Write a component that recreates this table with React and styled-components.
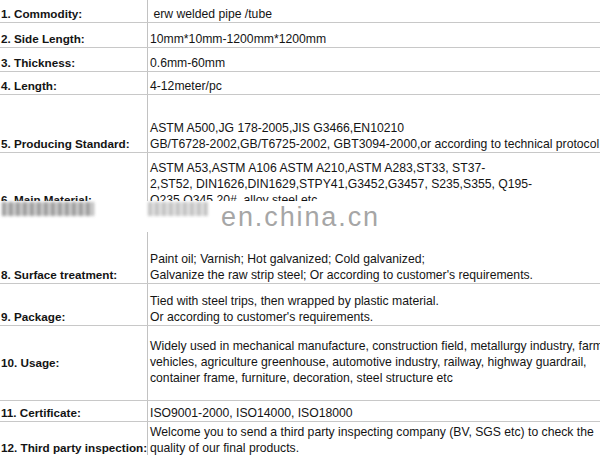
import React from "react";
import styled, { createGlobalStyle } from "styled-components";

const GlobalStyle = createGlobalStyle`
  html, body { margin: 0; padding: 0; background: #ffffff; overflow: hidden; }
`;

const Sheet = styled.div`
  position: relative;
  width: 600px;
  height: 455px;
  overflow: hidden;
  background: #ffffff;
  font-family: "Liberation Sans", Arial, sans-serif;
  color: #141414;
`;

const Row = styled.div`
  display: grid;
  grid-template-columns: 148px 1fr;
  height: ${(p) => p.$h}px;
  box-sizing: border-box;
  border-bottom: 1px solid #c8c8c8;
`;

const Label = styled.div`
  display: flex;
  align-items: ${(p) => (p.$center ? "center" : "flex-end")};
  box-sizing: border-box;
  border-right: 1px solid #c2c2c2;
  padding-left: 1px;
  font-weight: bold;
  font-size: 11.7px;
  line-height: 16px;
  white-space: nowrap;
`;

const Value = styled.div`
  display: flex;
  flex-direction: column;
  justify-content: flex-end;
  padding-left: 2px;
  padding-bottom: ${(p) => p.$pb || 0}px;
  font-size: 12.2px;
  line-height: 16px;
  white-space: pre;
  min-width: 0;
`;

const Line = styled.div``;

const WhiteBand = styled.div`
  position: absolute;
  left: 0;
  right: 0;
  top: 201px;
  height: 31px;
  background: #ffffff;
`;

const Smear = styled.div`
  position: absolute;
  left: ${(p) => p.$x}px;
  width: ${(p) => p.$w}px;
  top: 202px;
  height: 14px;
  background: repeating-linear-gradient(
    90deg,
    #8c8c8c 0 3px,
    #b4b4b4 3px 5px,
    #d0d0d0 5px 7px
  );
  filter: blur(1.6px);
  opacity: ${(p) => p.$o};
`;

const Watermark = styled.div`
  position: absolute;
  left: 221px;
  top: 200px;
  font-family: "Liberation Sans", Arial, sans-serif;
  font-size: 27px;
  letter-spacing: 1.9px;
  line-height: 34px;
  color: #a6a6a6;
  white-space: nowrap;
`;

const rows = [
  { label: "1. Commodity:", h: 23, lines: [" erw welded pipe /tube"] },
  { label: "2. Side Length:", h: 25, lines: ["10mm*10mm-1200mm*1200mm"] },
  { label: "3. Thickness:", h: 24, lines: ["0.6mm-60mm"] },
  { label: "4. Length:", h: 23, lines: ["4-12meter/pc"] },
  {
    label: "5. Producing Standard:",
    h: 58,
    lines: [
      "ASTM A500,JG 178-2005,JIS G3466,EN10210",
      "GB/T6728-2002,GB/T6725-2002, GBT3094-2000,or according to technical protocol",
    ],
  },
  {
    label: "6. Main Material:",
    h: 56,
    lines: [
      "ASTM A53,ASTM A106 ASTM A210,ASTM A283,ST33, ST37-",
      "2,ST52, DIN1626,DIN1629,STPY41,G3452,G3457, S235,S355, Q195-",
      "Q235,Q345,20#, alloy steel etc",
    ],
  },
  { label: "", h: 22, lines: [] },
  {
    label: "8. Surface treatment:",
    h: 53,
    lines: [
      "Paint oil; Varnish; Hot galvanized; Cold galvanized;",
      "Galvanize the raw strip steel; Or according to customer's requirements.",
    ],
  },
  {
    label: "9. Package:",
    h: 42,
    lines: [
      "Tied with steel trips, then wrapped by plastic material.",
      "Or according to customer's requirements.",
    ],
  },
  {
    label: "10. Usage:",
    h: 75,
    center: true,
    pb: 14,
    lines: [
      "Widely used in mechanical manufacture, construction field, metallurgy industry, farm",
      "vehicles, agriculture greenhouse, automotive industry, railway, highway guardrail,",
      "container frame, furniture, decoration, steel structure etc",
    ],
  },
  { label: "11. Certificate:", h: 21, lines: ["ISO9001-2000, ISO14000, ISO18000"] },
  {
    label: "12. Third party inspection:",
    h: 35,
    lines: [
      "Welcome you to send a third party inspecting company (BV, SGS etc) to check the",
      "quality of our final products.",
    ],
  },
];

export default function App() {
  return (
    <>
      <GlobalStyle />
      <Sheet>
        {rows.map((r, i) => (
          <Row key={i} $h={r.h}>
            <Label $center={r.center}>{r.label}</Label>
            <Value $pb={r.pb}>
              {r.lines.map((l, j) => (
                <Line key={j}>{l}</Line>
              ))}
            </Value>
          </Row>
        ))}
        <WhiteBand />
        <Smear $x={2} $w={92} $o={0.9} />
        <Smear $x={148} $w={60} $o={0.55} />
        <Watermark>en.china.cn</Watermark>
      </Sheet>
    </>
  );
}
